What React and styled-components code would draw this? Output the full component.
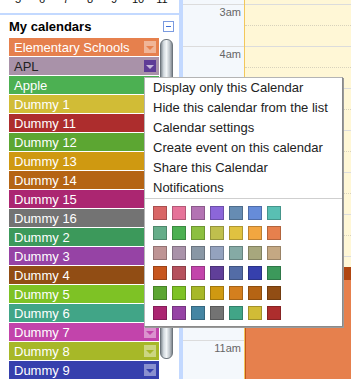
import React from "react";
import styled, { createGlobalStyle } from "styled-components";

const GlobalStyle = createGlobalStyle`
  html, body {
    margin: 0;
    padding: 0;
    overflow: hidden;
    background: #fff;
    font-family: "Liberation Sans", Arial, sans-serif;
  }
`;

const Page = styled.div`
  position: relative;
  display: flex;
  width: 351px;
  height: 379px;
  overflow: hidden;
`;

const Sidebar = styled.div`
  width: 179px;
  flex-shrink: 0;
  background: #fff;
  display: flex;
  flex-direction: column;
`;

const MiniCal = styled.div`
  height: 15px;
  overflow: hidden;
`;

const MiniRow = styled.div`
  display: grid;
  grid-template-columns: repeat(7, 24px);
  margin: -8px 0 0 6px;
  font-size: 11px;
  line-height: 14px;
  color: #111;
  text-align: center;
`;

const HLine = styled.div`
  height: 2px;
  background: #c3d9ff;
`;

const Header = styled.div`
  height: 26px;
  display: flex;
  align-items: center;
  justify-content: space-between;
  padding: 0 5px 0 9px;
  font-size: 13px;
  font-weight: bold;
  color: #000;
`;

const MinusBox = styled.div`
  width: 9px;
  height: 9px;
  border: 1px solid #7b9be0;
  display: flex;
  align-items: center;
  justify-content: center;

  &::after {
    content: "";
    width: 5px;
    height: 1px;
    background: #3e6fd6;
  }
`;

const ListArea = styled.div`
  display: flex;
  padding-left: 9px;
`;

const Items = styled.div`
  width: 150px;
  display: flex;
  flex-direction: column;
  gap: 1px;
`;

const Item = styled.div`
  height: 18px;
  display: flex;
  align-items: center;
  justify-content: space-between;
  padding-left: 5px;
  background: ${(p) => p.$color};
  color: ${(p) => (p.$active ? "#222" : "#fff")};
  font-size: 13px;
  white-space: nowrap;
`;

const ArrowBox = styled.div`
  width: 12px;
  height: 12px;
  margin-right: 3px;
  display: flex;
  align-items: center;
  justify-content: center;
  background: ${(p) => (p.$active ? "#5e3c96" : "rgba(255,255,255,0.42)")};

  &::after {
    content: "";
    margin-top: 2px;
    border-left: 4px solid transparent;
    border-right: 4px solid transparent;
    border-top: 4px solid ${(p) => (p.$active ? "#c6b8da" : p.$color)};
  }
`;

const Track = styled.div`
  width: 13px;
  margin-left: 1px;
  padding-top: 1px;
`;

const Thumb = styled.div`
  width: 11px;
  height: 318px;
  border: 1px solid #6d757c;
  border-radius: 6px;
  background: linear-gradient(
    to right,
    #858d94 0%,
    #d5dce1 25%,
    #f2f5f7 50%,
    #bfc6cc 78%,
    #838a91 100%
  );
`;

const Strip = styled.div`
  width: 4px;
  flex-shrink: 0;
  background: #c3d9ff;
`;

const TimeCol = styled.div`
  width: 61px;
  flex-shrink: 0;
  padding-top: 4px;
  background: #f4f8fc;
`;

const HourLabel = styled.div`
  height: 41px;
  border-top: 1px solid #dcdcdc;
  padding-right: 3px;
  text-align: right;
  font-size: 11px;
  line-height: 14px;
  color: #666;
`;

const DayCol = styled.div`
  position: relative;
  flex: 1;
  padding-top: 4px;
  background: #fff7d6;
  border-left: 1px solid #f2c75a;
`;

const HourCell = styled.div`
  height: 41px;
  border-top: 1px solid #dcdcdc;
  display: flex;
  flex-direction: column;
  justify-content: flex-start;

  &::after {
    content: "";
    margin-top: 20px;
    border-top: 1px dotted #d8d2bc;
  }
`;

const Event = styled.div`
  position: absolute;
  left: 0;
  right: 0;
  bottom: 0;
  display: flex;
  flex-direction: column;
  border-left: 1px solid #c2561c;
  background: #e6804d;
`;

const EventHead = styled.div`
  height: 13px;
  background: #b0450f;
`;

const Menu = styled.div`
  position: absolute;
  left: 144px;
  top: 77px;
  width: 197px;
  background: #fff;
  border: 1px solid #b4b4b4;
  border-right-color: #8a8a8a;
  border-bottom-color: #8a8a8a;
  box-shadow: 1px 1px 0 #9a9a9a;
  font-size: 13px;
  color: #222;
`;

const MenuItem = styled.div`
  height: 20px;
  line-height: 20px;
  padding-left: 8px;
  white-space: nowrap;
`;

const Separator = styled.div`
  height: 1px;
  background: #cfcfcf;
`;

const Swatches = styled.div`
  display: grid;
  grid-template-columns: repeat(7, 14px);
  column-gap: 5px;
  row-gap: 6px;
  padding: 7px 0 6px 8px;
`;

const Swatch = styled.div`
  width: 14px;
  height: 14px;
  box-sizing: border-box;
  background: ${(p) => p.$color};
  box-shadow: inset 0 0 0 1px rgba(0, 0, 0, 0.22);
`;

const calendars = [
  { name: "Elementary Schools", color: "#e6804d" },
  { name: "APL", color: "#a992a9", active: true },
  { name: "Apple", color: "#4cb052" },
  { name: "Dummy 1", color: "#d1bc36" },
  { name: "Dummy 11", color: "#ad2d2d" },
  { name: "Dummy 12", color: "#5ca632" },
  { name: "Dummy 13", color: "#cf9911" },
  { name: "Dummy 14", color: "#b56414" },
  { name: "Dummy 15", color: "#ab2671" },
  { name: "Dummy 16", color: "#737373" },
  { name: "Dummy 2", color: "#3c995b" },
  { name: "Dummy 3", color: "#9643a5" },
  { name: "Dummy 4", color: "#914d14" },
  { name: "Dummy 5", color: "#7ec225" },
  { name: "Dummy 6", color: "#41a587" },
  { name: "Dummy 7", color: "#c244ab" },
  { name: "Dummy 8", color: "#a7b828" },
  { name: "Dummy 9", color: "#3640ad" },
];

const palette = [
  "#d96666", "#e67399", "#b373b3", "#8c66d9", "#668cb3", "#668cd9", "#59bfb3",
  "#65ad89", "#4cb052", "#8cbf40", "#bfbf4d", "#e0c240", "#f2a640", "#e6804d",
  "#be9494", "#a992a9", "#8997a5", "#94a2be", "#85aaa5", "#a7a77d", "#c4a883",
  "#c7561e", "#b5515d", "#c244ab", "#603f99", "#536ca6", "#3640ad", "#3c995b",
  "#5ca632", "#7ec225", "#a7b828", "#cf9911", "#d47f1e", "#b56414", "#914d14",
  "#ab2671", "#9643a5", "#4585a3", "#737373", "#41a587", "#d1bc36", "#ad2d2d",
];

const menuItems = [
  "Display only this Calendar",
  "Hide this calendar from the list",
  "Calendar settings",
  "Create event on this calendar",
  "Share this Calendar",
  "Notifications",
];

const hours = ["3am", "4am", "5am", "6am", "7am", "8am", "9am", "10am", "11am"];

const App = () => {
  return (
    <Page>
      <GlobalStyle />
      <Sidebar>
        <MiniCal>
          <MiniRow>
            {["5", "6", "7", "8", "9", "10", "11"].map((d) => (
              <span key={d}>{d}</span>
            ))}
          </MiniRow>
        </MiniCal>
        <HLine />
        <Header>
          My calendars
          <MinusBox />
        </Header>
        <ListArea>
          <Items>
            {calendars.map((c) => (
              <Item key={c.name} $color={c.color} $active={c.active}>
                {c.name}
                <ArrowBox $color={c.color} $active={c.active} />
              </Item>
            ))}
          </Items>
          <Track>
            <Thumb />
          </Track>
        </ListArea>
      </Sidebar>
      <Strip />
      <TimeCol>
        {hours.map((h) => (
          <HourLabel key={h}>{h}</HourLabel>
        ))}
      </TimeCol>
      <DayCol>
        {hours.map((h) => (
          <HourCell key={h} />
        ))}
        <Event style={{ top: 267 }}>
          <EventHead />
        </Event>
      </DayCol>
      <Menu>
        {menuItems.map((m) => (
          <MenuItem key={m}>{m}</MenuItem>
        ))}
        <Separator />
        <Swatches>
          {palette.map((c, i) => (
            <Swatch key={i} $color={c} />
          ))}
        </Swatches>
      </Menu>
    </Page>
  );
};

export default App;
